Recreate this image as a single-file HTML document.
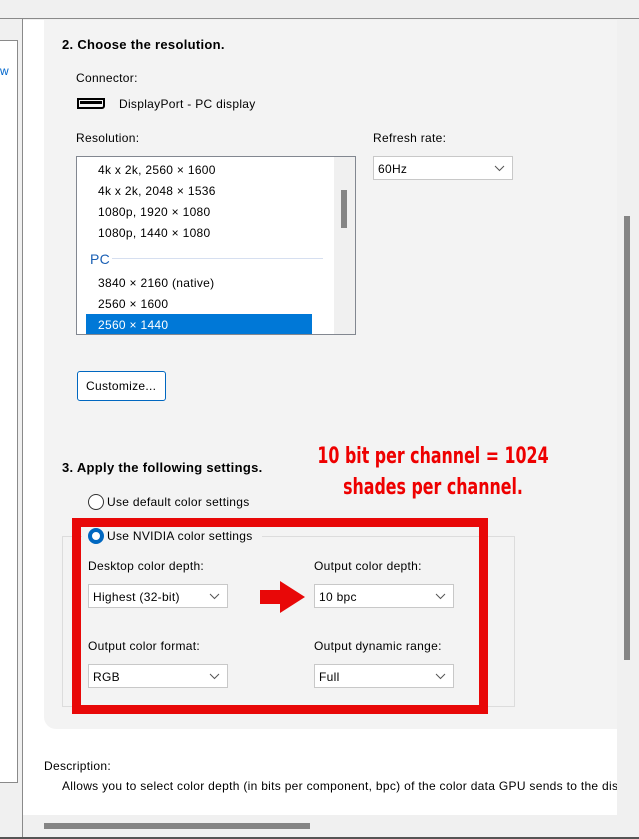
<!DOCTYPE html>
<html><head><meta charset="utf-8"><style>
*{margin:0;padding:0;box-sizing:border-box}
body{width:639px;height:839px;overflow:hidden;background:#f0f0f0;font-family:"Liberation Sans",sans-serif;font-size:12px;color:#000;position:relative;letter-spacing:.3px}
.a{position:absolute}
.t{position:absolute;white-space:nowrap}
.dd{position:absolute;background:#fff;border:1px solid #c8c8c8;height:24px;padding:5px 4px;font-size:12px}
.dd svg{position:absolute;right:7px;top:8px}
</style></head><body>
<div class="a" style="left:0;top:0;width:639px;height:19px;background:#f0f0f0;border-bottom:1px solid #8a8a8a"></div>
<div class="a" style="left:0;top:40px;width:18px;height:743px;background:#fff;border:1px solid #8a8a8a;border-left:none"></div>
<div class="t" style="left:0;top:64px;color:#0066cc">w</div>
<div class="a" style="left:22px;top:19px;width:1px;height:818px;background:#8a8a8a"></div>
<div class="a" style="left:23px;top:20px;width:594px;height:795px;background:#fff"></div>
<div class="a" style="left:44px;top:20px;width:573px;height:709px;background:#f3f3f3;border-bottom-left-radius:12px"></div>
<div class="a" style="left:617px;top:20px;width:20px;height:795px;background:#f0f0f0"></div>
<div class="a" style="left:624px;top:216px;width:6px;height:444px;background:#858585"></div>
<div class="a" style="left:23px;top:815px;width:614px;height:22px;background:#f0f0f0"></div>
<div class="a" style="left:44px;top:823px;width:266px;height:6px;background:#858585"></div>
<div class="a" style="left:0;top:837px;width:639px;height:2px;background:#555"></div>

<div class="t" style="left:62px;top:37px;font-weight:bold;font-size:13px">2. Choose the resolution.</div>
<div class="t" style="left:76px;top:71px">Connector:</div>
<div class="a" style="left:77px;top:98px;width:28px;height:11px;border:2px solid #000;border-radius:0 0 3px 0"><div style="margin:1px;height:3px;background:#000"></div></div>
<div class="t" style="left:119px;top:97px">DisplayPort - PC display</div>
<div class="t" style="left:76px;top:131px">Resolution:</div>
<div class="a" style="left:76px;top:156px;width:280px;height:179px;background:#fff;border:1px solid #828790;overflow:hidden">
 <div class="t" style="left:21px;top:6px">4k x 2k, 2560 × 1600</div>
 <div class="t" style="left:21px;top:27px">4k x 2k, 2048 × 1536</div>
 <div class="t" style="left:21px;top:48px">1080p, 1920 × 1080</div>
 <div class="t" style="left:21px;top:69px">1080p, 1440 × 1080</div>
 <div class="t" style="left:13px;top:94px;color:#1a5fb4;font-size:14px">PC</div>
 <div class="a" style="left:35px;top:101px;width:211px;height:1px;background:#d6dff0"></div>
 <div class="t" style="left:21px;top:119px">3840 × 2160 (native)</div>
 <div class="t" style="left:21px;top:140px">2560 × 1600</div>
 <div class="a" style="left:9px;top:157px;width:226px;height:21px;background:#0078d7"></div>
 <div class="t" style="left:21px;top:161px;color:#fff">2560 × 1440</div>
 <div class="a" style="left:257px;top:0;width:21px;height:178px;background:#f0f0f0"></div>
 <div class="a" style="left:264px;top:33px;width:6px;height:38px;background:#858585"></div>
</div>
<div class="t" style="left:373px;top:131px">Refresh rate:</div>
<div class="dd" style="left:373px;top:156px;width:140px">60Hz<svg width="11" height="7"><path d="M1 1l4.5 4.5L10 1" fill="none" stroke="#555"/></svg></div>
<div class="a" style="left:77px;top:371px;width:89px;height:30px;background:#fff;border:1px solid #0067c0;border-radius:3px"></div>
<div class="t" style="left:86px;top:379px">Customize...</div>

<div class="t" style="left:62px;top:460px;font-weight:bold;font-size:13px">3. Apply the following settings.</div>
<div class="t" style="left:283px;top:441px;width:300px;text-align:center;color:#e00;font-family:'DejaVu Sans Condensed','DejaVu Sans',sans-serif;font-weight:bold;font-size:22px;line-height:31px;letter-spacing:0;transform:scaleX(.8)">10 bit per channel = 1024<br>shades per channel.</div>
<div class="a" style="left:88px;top:494px;width:16px;height:16px;border:1px solid #333;border-radius:50%;background:#fff"></div>
<div class="t" style="left:107px;top:495px">Use default color settings</div>
<div class="a" style="left:62px;top:536px;width:453px;height:171px;border:1px solid #dcdcdc"></div>
<div class="a" style="left:72px;top:518px;width:416px;height:196px;border:9px solid #e80808"></div>
<div class="a" style="left:82px;top:530px;width:180px;height:14px;background:#f3f3f3"></div>
<div class="a" style="left:88px;top:528px;width:16px;height:16px;border:4px solid #0067c0;border-radius:50%;background:#fff"></div>
<div class="t" style="left:107px;top:529px">Use NVIDIA color settings</div>
<div class="t" style="left:88px;top:559px">Desktop color depth:</div>
<div class="t" style="left:314px;top:559px">Output color depth:</div>
<div class="dd" style="left:88px;top:584px;width:140px">Highest (32-bit)<svg width="11" height="7"><path d="M1 1l4.5 4.5L10 1" fill="none" stroke="#555"/></svg></div>
<div class="dd" style="left:314px;top:584px;width:140px">10 bpc<svg width="11" height="7"><path d="M1 1l4.5 4.5L10 1" fill="none" stroke="#555"/></svg></div>
<svg class="a" style="left:260px;top:580px" width="46" height="34"><path d="M0 10h20V1l25 16-25 16v-9H0z" fill="#e80808"/></svg>
<div class="t" style="left:88px;top:639px">Output color format:</div>
<div class="t" style="left:314px;top:639px">Output dynamic range:</div>
<div class="dd" style="left:88px;top:664px;width:140px">RGB<svg width="11" height="7"><path d="M1 1l4.5 4.5L10 1" fill="none" stroke="#555"/></svg></div>
<div class="dd" style="left:314px;top:664px;width:140px">Full<svg width="11" height="7"><path d="M1 1l4.5 4.5L10 1" fill="none" stroke="#555"/></svg></div>

<div class="t" style="left:44px;top:759px">Description:</div>
<div class="a" style="left:62px;top:779px;width:555px;overflow:hidden;white-space:nowrap">Allows you to select color depth (in bits per component, bpc) of the color data GPU sends to the display.</div>
</body></html>
